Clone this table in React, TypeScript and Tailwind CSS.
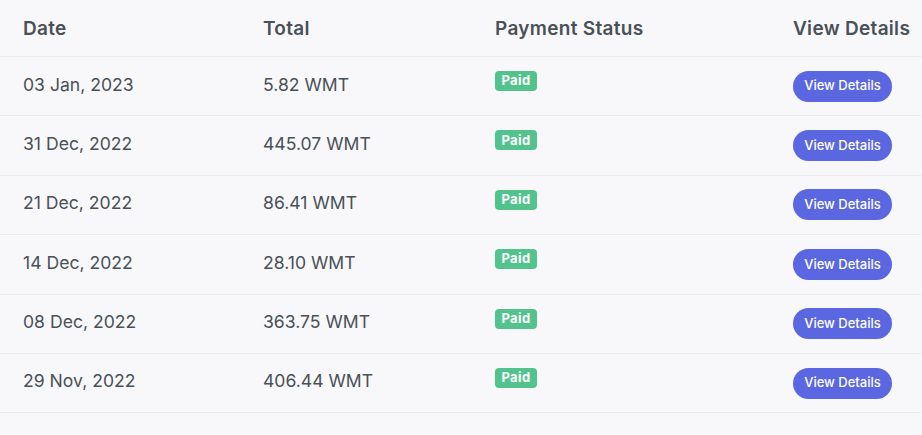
import React from "react";

const rows = [
  ["03 Jan, 2023", "5.82 WMT"],
  ["31 Dec, 2022", "445.07 WMT"],
  ["21 Dec, 2022", "86.41 WMT"],
  ["14 Dec, 2022", "28.10 WMT"],
  ["08 Dec, 2022", "363.75 WMT"],
  ["29 Nov, 2022", "406.44 WMT"],
];

export default function App() {
  return (
    <div
      className="w-[922px] h-[435px] bg-[#f8f8fa] overflow-hidden text-[#495057]"
      style={{ fontFamily: "Inter, 'Noto Sans', sans-serif" }}
    >
      <div className="grid grid-cols-[240px_232px_298px_1fr] h-[57px] pt-[3px] border-b border-[#ececf0] items-center text-[19px] font-semibold tracking-[0.3px]">
        <div className="pl-[23px]">Date</div>
        <div className="pl-[23px]">Total</div>
        <div className="pl-[23px]">Payment Status</div>
        <div className="pl-[23px] whitespace-nowrap">View Details</div>
      </div>
      {rows.map(([d, t]) => (
        <div
          key={d}
          className="grid grid-cols-[240px_232px_298px_1fr] h-[59.4px] border-b border-[#ececf0] items-center text-[17.6px]"
        >
          <div className="pl-[23px] -mt-[3px]">{d}</div>
          <div className="pl-[23px] -mt-[3px]">{t}</div>
          <div className="pl-[23px] self-start pt-[14px] flex">
            <span className="flex items-center justify-center h-[20px] w-[42px] rounded-[4px] bg-[#52c38d] text-white text-[13px] font-bold tracking-[0.4px]">
              Paid
            </span>
          </div>
          <div className="pl-[23px] flex">
            <button className="h-[31px] w-[99px] rounded-full bg-[#5a67e1] text-white text-[13px] font-medium">
              View Details
            </button>
          </div>
        </div>
      ))}
    </div>
  );
}
